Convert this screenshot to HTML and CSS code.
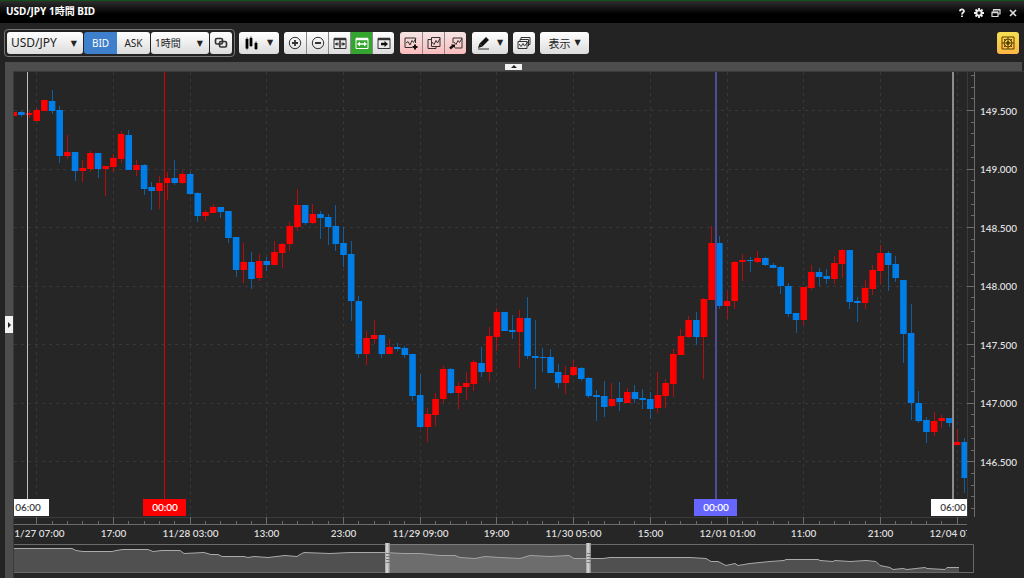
FILE: index.html
```html
<!DOCTYPE html>
<html lang="ja">
  <head>
    <meta charset="UTF-8" />
    <meta name="viewport" content="width=device-width, initial-scale=1.0" />
    <title>USD/JPY 1時間 BID</title>
    <link rel="stylesheet" href="styles.css">
  </head>
  <body>
    <header class="title-bar">
      <h1>USD/JPY 1時間 BID</h1>
      <div class="window-buttons">
        <button aria-label="Help">
          <svg width="10" height="10" viewBox="0 0 10 10"><path d="M3 3.2C3 .8 7 .8 7 3.2 7 4.6 5 4.6 5 6.4M5 7.6V9" stroke="#eee" stroke-width="1.8" fill="none" /></svg>
        </button>
        <button aria-label="Settings">
          <svg width="10" height="10" viewBox="0 0 10 10"><path d="M5 0V10M0 5H10M1.5 1.5L8.5 8.5M8.5 1.5L1.5 8.5" stroke="#eee" stroke-width="1.8" /><circle cx="5" cy="5" r="3.6" fill="#eee" /><circle cx="5" cy="5" r="1.7" fill="#111" /></svg>
        </button>
        <button aria-label="Restore">
          <svg width="10" height="10" viewBox="0 0 10 10"><path d="M2.5 3V1.5H9V6H7.5M1 4H7V8.5H1Z" stroke="#ddd" stroke-width="1.2" fill="none" stroke-linejoin="round" /><path d="M1 4.5H7M3 1.7H9" stroke="#ddd" stroke-width="1.6" /></svg>
        </button>
        <button aria-label="Close">
          <svg width="10" height="10" viewBox="0 0 10 10"><path d="M2 2L8 8M8 2L2 8" stroke="#ddd" stroke-width="1.7" /></svg>
        </button>
      </div>
    </header>

    <nav class="toolbar">
      <div class="pair-group">
        <label class="picker pair">
          <select aria-label="Currency pair"><option>USD/JPY</option><option>EUR/JPY</option></select>
        </label>
        <div class="group">
          <button class="text-button active-blue">BID</button>
          <button class="text-button">ASK</button>
        </div>
        <label class="picker period">
          <select aria-label="Period"><option>1時間</option><option>4時間</option></select>
        </label>
        <button class="tool" aria-label="Link charts">
          <svg width="14" height="12" viewBox="0 0 14 12"><rect x="1.5" y="1.5" width="7" height="5.5" rx="1.5" stroke-width="1.7" /><rect x="5.5" y="4.5" width="7" height="5.5" rx="1.5" stroke-width="1.7" /></svg>
        </button>
      </div>

      <button class="tool wide" aria-label="Chart type">
        <svg width="14" height="14" viewBox="0 0 14 14"><path d="M2 1.5V13.5M6 0.5V11M11 5.5V14" stroke="#222" /><path d="M2 3V12.5M6 2V10M11 7V13" stroke-width="2.8" stroke="#000" /></svg>
        <span class="arrow">▼</span>
      </button>

      <div class="group">
        <button class="tool" aria-label="Zoom in">
          <svg width="14" height="14" viewBox="0 0 14 14"><circle cx="7" cy="7" r="5.7" /><path d="M4 7H10M7 4V10" stroke-width="1.8" /></svg>
        </button>
        <button class="tool" aria-label="Zoom out">
          <svg width="14" height="14" viewBox="0 0 14 14"><circle cx="7" cy="7" r="5.7" /><path d="M4 7H10" stroke-width="1.8" /></svg>
        </button>
        <button class="tool" aria-label="Fit all">
          <svg width="14" height="14" viewBox="0 0 14 14"><path d="M1 2.5H13V12.5H1Z" /><path d="M1 3H13" stroke-width="2.4" /><path d="M2 8H12M7 4V12" /><path d="M2 8L4.5 6V10ZM12 8L9.5 6V10ZM7 4.5L5.5 6.5H8.5ZM7 11.5L5.5 9.5H8.5Z" fill="#333" stroke="none" /></svg>
        </button>
        <button class="tool active-green" aria-label="Fit width">
          <svg width="14" height="14" viewBox="0 0 14 14"><path d="M1 2.5H13V12.5H1Z" /><path d="M1 3H13" stroke-width="2.4" /><path d="M3 8H11" stroke-width="1.6" /><path d="M2 8L5 5.5V10.5ZM12 8L9 5.5V10.5Z" fill="#fff" stroke="none" /></svg>
        </button>
        <button class="tool" aria-label="Go to latest">
          <svg width="14" height="14" viewBox="0 0 14 14"><path d="M1 2.5H13V12.5H1Z" /><path d="M1 3H13" stroke-width="2.4" /><path d="M4 8H8" stroke-width="2.4" stroke="#111" /><path d="M7.5 5L11 8L7.5 11Z" fill="#111" stroke="none" /></svg>
        </button>
      </div>

      <div class="group pink">
        <button class="tool" aria-label="Add indicator">
          <svg width="14" height="14" viewBox="0 0 14 14"><path d="M11.5 7V2H1V11.5H8" /><path d="M2 7L4 5.5L6 9L8 4.5L9.5 6.5L12 2" /><path d="M8.5 11H13.5M11 8.5V13.5" stroke-width="2" stroke="#111" /></svg>
        </button>
        <button class="tool" aria-label="Copy indicator">
          <svg width="14" height="14" viewBox="0 0 14 14"><path d="M4 3.5H1V12.5H9V11" /><path d="M4.5 1.5H13V10.5H4.5Z" /><path d="M5 6L7 8.5L9 4.5L10.5 7L13 2.5" /></svg>
        </button>
        <button class="tool" aria-label="Move indicator">
          <svg width="14" height="14" viewBox="0 0 14 14"><path d="M4 7V2H13V12H6" /><path d="M5 6L7 8.5L9 4.5L10.5 6.5L13 2.5" /><path d="M1 12.5L4.5 9.5" stroke-width="2.4" stroke="#111" /><path d="M2 8.5H6V12Z" fill="#111" stroke="none" /></svg>
        </button>
      </div>

      <button class="tool pen" aria-label="Draw">
        <svg width="14" height="14" viewBox="0 0 14 14"><path d="M4 9L10.5 2.5" stroke-width="4" stroke="#111" /><path d="M1 12L2.5 7.5L5.5 10.5Z" fill="#111" stroke="none" /><path d="M1 13H12" /></svg>
        <span class="arrow">▼</span>
      </button>

      <button class="tool" aria-label="Chart windows">
        <svg width="14" height="14" viewBox="0 0 14 14"><path d="M4 4V1.5H13V8.5H11.5M3 6V3.5H11.5V10H10.5" /><path d="M1 5.5H10V12.5H1Z" /><path d="M2 8L4 10.5L6 7.5L7.5 10L12 4.5" /></svg>
      </button>

      <button class="tool display">表示 <span class="arrow">▼</span></button>

      <button class="tool yellow" aria-label="Crosshair">
        <svg width="14" height="14" viewBox="0 0 14 14"><path d="M1 1H13V13H1Z" /><circle cx="7" cy="7" r="4" /><path d="M7 1V13M1 7H13M3 3L5 5M11 3L9 5M3 11L5 9M11 11L9 9" /><circle cx="7" cy="7" r="1.5" fill="#5a4300" /></svg>
      </button>
    </nav>

    <div class="top-strip">
      <button aria-label="Collapse toolbar"><svg width="6" height="3" viewBox="0 0 6 3"><path d="M0 3L3 0L6 3Z" fill="#222" /></svg></button>
    </div>

    <main class="workspace">
      <aside class="side-strip">
        <button aria-label="Open side panel"><svg width="3" height="6" viewBox="0 0 3 6"><path d="M0 0L3 3L0 6Z" fill="#222" /></svg></button>
      </aside>
      <div class="chart-area">
        <div class="chart"><svg id="chart"></svg></div>
        <div class="navigator"><svg id="navigator"></svg></div>
      </div>
    </main>
    <script src="chart.js"></script>
  </body>
</html>
```
FILE: styles.css
```css
* {
  margin: 0;
  padding: 0;
  box-sizing: border-box;
}

body {
  font-family: "Noto Sans", "Noto Sans CJK JP", sans-serif;
  background-color: #232323;
  color: #eee;
  display: flex;
  flex-direction: column;
  height: 100vh;
  overflow: hidden;
}

button,
select {
  font-family: inherit;
  border: none;
  cursor: pointer;
}

/* Title bar */
.title-bar {
  display: flex;
  align-items: center;
  justify-content: space-between;
  height: 23px;
  padding: 0 6px 2px;
  border-top: 1px solid #12501a;
  background: linear-gradient(#2e2e2e, #000 60%);
}

.title-bar h1 {
  font-size: 10px;
  line-height: 20px;
  color: #fff;
}

.window-buttons {
  display: flex;
  gap: 7px;
  padding-top: 4px;
}

.window-buttons button {
  display: flex;
  background: none;
}

/* Toolbar */
.toolbar {
  display: flex;
  align-items: center;
  gap: 5px;
  height: 39px;
  padding: 0 5px 0 4px;
}

.pair-group {
  display: flex;
  gap: 1px;
  padding: 2px;
  margin-right: -1px;
  border: 1px solid #777;
  border-radius: 4px;
}

.group {
  display: flex;
  border-radius: 3px;
  overflow: hidden;
}

.toolbar > .group {
  margin-right: 1px;
}

.picker,
.tool,
.text-button {
  height: 22px;
  background: linear-gradient(#fff, #dcdcdc);
  color: #222;
}

.picker {
  position: relative;
  display: flex;
  border-radius: 3px;
}

.picker select {
  width: 100%;
  padding-left: 4px;
  appearance: none;
  background: none;
  font-size: 12px;
  color: #222;
}

.picker::after {
  content: "▼";
  position: absolute;
  right: 6px;
  top: 6px;
  font-family: "DejaVu Sans", sans-serif;
  font-size: 8px;
  line-height: 12px;
  pointer-events: none;
}

.pair {
  width: 76px;
}

.period {
  width: 58px;
}

.period select {
  font-size: 10px;
}

.text-button {
  width: 33px;
  font-size: 10px;
}

.tool {
  display: flex;
  align-items: center;
  justify-content: center;
  width: 22px;
  border-radius: 3px;
  font-size: 11px;
}

.group .tool {
  border-radius: 0;
}

.group .tool + .tool {
  border-left: 1px solid #888;
}

.tool svg {
  fill: none;
  stroke: #333;
}

.arrow {
  font-family: "DejaVu Sans", sans-serif;
  font-size: 8px;
}

.wide {
  width: 40px;
  gap: 8px;
}

.pen {
  width: 36px;
  gap: 6px;
}

.display {
  width: 49px;
  gap: 4px;
}

.active-blue {
  background: #3f80cc;
  color: #fff;
}

.active-green {
  background: #34a52f;
}

.active-green svg {
  stroke: #fff;
}

.pink .tool {
  background: linear-gradient(#f6e4e4, #fbbcbc);
}

.yellow {
  margin-left: auto;
  background: linear-gradient(#f5e055, #fdb545);
}

.yellow svg {
  stroke: #5a4300;
}

/* Collapsible strips */
.top-strip {
  display: flex;
  justify-content: center;
  align-items: center;
  height: 9px;
  margin: 0 2px 0 5px;
  background-color: #4d4d4d;
}

.top-strip button,
.side-strip button {
  display: flex;
  align-items: center;
  justify-content: center;
  background-color: #f2f2f2;
}

.top-strip button {
  width: 17px;
  height: 6px;
}

.workspace {
  flex: 1;
  display: flex;
  min-height: 0;
}

.side-strip {
  display: flex;
  align-items: center;
  width: 9px;
  margin-left: 5px;
  background-color: #4d4d4d;
  border-right: 1px solid #3a3a3a;
}

.side-strip button {
  width: 8px;
  height: 17px;
}

/* Chart */
.chart-area {
  flex: 1;
  display: flex;
  flex-direction: column;
  min-width: 0;
  background-color: #262626;
}

.chart {
  flex: 1;
  min-height: 0;
  border-top: 1px solid #3a3a3a;
}

.navigator {
  height: 35px;
}

.chart svg,
.navigator svg {
  display: block;
  width: 100%;
  height: 100%;
}

.label {
  font-family: Lato, sans-serif;
  font-size: 10px;
  font-weight: 600;
  fill: #ddd;
}

.time-label {
  text-anchor: middle;
}

.grid {
  stroke: #383838;
  stroke-dasharray: 3 4;
}

.frame {
  stroke: #3a3a3a;
}

.axis {
  stroke: #6c6c6c;
}

.up {
  fill: #f00;
  stroke: #f00;
}

.down {
  fill: #007ee8;
  stroke: #007ee8;
}

.wick {
  opacity: 0.65;
}

.body {
  stroke: none;
}

.nav-area {
  fill: #505050;
  stroke: none;
}

.nav-line {
  fill: none;
  stroke: #aaa;
}

.nav-border {
  fill: none;
  stroke: #6a6a6a;
}

.nav-window {
  fill: #999;
  fill-opacity: 0.4;
}
```
FILE: chart.js
```js
// One row per hour: direction, high, body top, body bottom, low
const candles = [
  ["r", 112, 112, 116, 116], ["b", 111, 112, 115, 117], ["r", 111, 113, 115, 118],
  ["r", 108, 110, 121, 121], ["r", 100, 100, 111, 111], ["b", 90, 101, 111, 114],
  ["b", 106, 110, 156, 163], ["r", 135, 152, 156, 159], ["b", 152, 152, 171, 181],
  ["r", 160, 168, 171, 182], ["r", 151, 153, 169, 172], ["b", 153, 153, 169, 178],
  ["r", 166, 166, 169, 196], ["r", 154, 158, 167, 172], ["r", 131, 134, 159, 163],
  ["b", 130, 135, 170, 170], ["r", 160, 165, 170, 176], ["b", 164, 165, 189, 195],
  ["b", 182, 187, 191, 210], ["r", 176, 183, 191, 209], ["r", 172, 178, 183, 200],
  ["b", 160, 178, 183, 185], ["r", 171, 174, 183, 184], ["b", 172, 174, 194, 195],
  ["b", 192, 193, 216, 222], ["r", 210, 212, 216, 221], ["r", 204, 207, 213, 213],
  ["b", 207, 207, 212, 218], ["b", 211, 211, 238, 243], ["b", 237, 237, 270, 277],
  ["r", 243, 262, 270, 283], ["b", 252, 262, 279, 289], ["r", 254, 261, 278, 281],
  ["b", 257, 261, 265, 271], ["r", 241, 252, 265, 265], ["r", 243, 244, 253, 268],
  ["r", 222, 226, 244, 251], ["r", 189, 205, 227, 231], ["b", 205, 205, 223, 225],
  ["r", 204, 214, 223, 224], ["b", 211, 214, 218, 239], ["b", 214, 217, 227, 245],
  ["b", 205, 226, 244, 251], ["b", 227, 243, 255, 267], ["b", 241, 254, 301, 321],
  ["b", 296, 301, 354, 358], ["r", 331, 338, 354, 365], ["r", 320, 335, 339, 344],
  ["b", 335, 335, 354, 358], ["r", 339, 347, 354, 354], ["b", 343, 347, 349, 351],
  ["b", 346, 348, 355, 358], ["b", 354, 354, 396, 401], ["b", 374, 395, 427, 428],
  ["r", 408, 414, 427, 442], ["r", 393, 399, 415, 426], ["r", 366, 369, 399, 403],
  ["b", 368, 369, 393, 394], ["r", 382, 386, 393, 409], ["r", 372, 383, 387, 400],
  ["r", 360, 362, 384, 391], ["b", 347, 363, 372, 377], ["r", 327, 336, 372, 382],
  ["r", 308, 312, 337, 351], ["b", 312, 312, 331, 331], ["b", 315, 330, 332, 339],
  ["r", 310, 318, 332, 368], ["b", 297, 318, 356, 359], ["b", 320, 356, 358, 389],
  ["b", 348, 357, 358, 372], ["b", 349, 357, 373, 373], ["b", 364, 372, 383, 388],
  ["r", 366, 375, 383, 394], ["r", 360, 367, 375, 376], ["b", 367, 368, 379, 381],
  ["b", 377, 378, 396, 398], ["b", 390, 395, 397, 421], ["b", 381, 396, 407, 417],
  ["r", 383, 399, 406, 407], ["b", 382, 398, 402, 411], ["r", 388, 392, 403, 403],
  ["b", 385, 392, 399, 403], ["b", 389, 398, 400, 409], ["b", 392, 399, 409, 419],
  ["r", 372, 395, 408, 413], ["r", 379, 383, 396, 408], ["r", 349, 354, 384, 397],
  ["r", 329, 336, 355, 355], ["r", 316, 320, 337, 338], ["b", 312, 320, 337, 345],
  ["r", 298, 299, 337, 379], ["r", 226, 243, 300, 300], ["b", 236, 243, 306, 309],
  ["r", 291, 301, 306, 319], ["r", 261, 262, 301, 309], ["r", 254, 260, 262, 281],
  ["b", 257, 260, 261, 272], ["r", 251, 258, 262, 263], ["b", 257, 258, 265, 266],
  ["b", 263, 265, 268, 268], ["b", 266, 267, 286, 294], ["b", 283, 286, 314, 317],
  ["b", 313, 313, 320, 333], ["r", 287, 287, 320, 325], ["r", 265, 272, 288, 290],
  ["b", 268, 272, 277, 286], ["b", 269, 276, 279, 284], ["r", 256, 263, 279, 284],
  ["r", 249, 250, 264, 278], ["b", 250, 250, 302, 309], ["b", 297, 301, 303, 322],
  ["r", 280, 288, 303, 309], ["r", 265, 270, 289, 295], ["r", 245, 253, 271, 284],
  ["b", 251, 253, 265, 291], ["b", 256, 264, 278, 282], ["b", 280, 280, 334, 363],
  ["b", 304, 333, 403, 420], ["b", 391, 403, 421, 423], ["b", 417, 420, 432, 443],
  ["r", 412, 421, 432, 436], ["r", 415, 418, 421, 428], ["b", 418, 418, 423, 427],
  ["r", 429, 442, 445, 445], ["b", 438, 442, 478, 493],
];

const times = [
  "11/27 07:00", "17:00", "11/28 03:00", "13:00", "23:00", "11/29 09:00", "19:00",
  "11/30 05:00", "15:00", "12/01 01:00", "11:00", "21:00", "12/04 07:00",
];

// Session lines: position, line width, line, box and text colours, text
const sessions = [
  [13, 1, "#c0c0c0", "#fff", "#444", "06:00"],
  [150, 1, "#d80000", "#f00", "#fff", "00:00"],
  [701, 2, "#4c4c98", "#6666ff", "#fff", "00:00"],
  [938, 2, "#8c8c8c", "#fff", "#444", "06:00"],
];

const history = [
  [0, 4], [16, 4], [36, 4], [58, 4], [62, 6], [69, 7], [98, 7], [102, 6], [109, 5],
  [134, 5], [139, 7], [148, 6], [166, 6], [170, 9], [190, 8], [197, 10], [204, 10],
  [208, 12], [230, 12], [234, 13], [240, 12], [254, 13], [271, 11], [283, 12],
  [286, 10], [290, 8], [316, 9], [336, 8], [371, 8], [389, 9], [406, 9], [426, 11],
  [441, 11], [446, 13], [461, 14], [471, 12], [486, 13], [506, 14], [516, 11],
  [536, 12], [555, 11], [560, 14], [573, 14], [589, 14], [596, 13], [631, 13],
  [676, 13], [692, 14], [697, 17], [704, 17], [712, 21], [721, 19], [724, 21],
  [736, 19], [756, 17], [770, 16], [772, 15], [786, 15], [804, 15], [806, 16],
  [819, 17], [821, 16], [836, 17], [852, 16], [862, 17], [866, 21], [876, 23],
  [879, 25], [889, 24], [893, 25], [911, 23], [913, 24], [931, 25], [933, 23],
  [945, 23],
];

const line = (x1, y1, x2, y2, cls) =>
  `<line x1="${x1}" y1="${y1}" x2="${x2}" y2="${y2}" class="${cls}" />`;

function drawChart() {
  const svg = document.getElementById("chart");
  const w = svg.clientWidth;
  const h = svg.clientHeight;
  const plotW = w - 57;
  const plotH = h - 26;
  const kx = plotW / 953;
  const ky = plotH / 445;
  const step = 7.67 * kx;
  const first = 22.7 * kx;
  const barW = step * 0.86;
  const sharp = (v) => Math.round(v - 0.5) + 0.5;
  const sy = (v) => Math.round((v - 72) * ky);
  let grid = "";
  let axes = "";
  let labels = "";
  let bars = "";
  let marks = "";

  axes += line(0, plotH + 0.5, plotW, plotH + 0.5, "frame");
  axes += line(0, plotH + 7.5, plotW, plotH + 7.5, "axis");
  axes += line(plotW + 0.5, 0, plotW + 0.5, plotH, "frame");
  axes += line(plotW + 7.5, 0, plotW + 7.5, plotH, "axis");

  for (let i = 0; i <= 60; i++) {
    const x = sharp(first + i * 2 * step);
    const major = i % 5 === 0;
    axes += line(x, plotH + (major ? 0 : 4), x, plotH + 7, "axis");
    if (major) {
      grid += line(x, 0, x, plotH, "grid");
      labels += `<text class="label time-label" x="${x}" y="${plotH + 20}">${times[i / 5]}</text>`;
    }
  }

  // Price scale, half a yen per grid line
  for (let i = -3; i < 35; i++) {
    const y = sharp((38.5 + i * 11.71) * ky);
    if (y > plotH) break;
    const major = i % 5 === 0;
    axes += line(plotW + (major ? 0 : 4), y, plotW + 7, y, "axis");
    if (major) grid += line(0, y, plotW, y, "grid");
  }
  for (let i = 0; i < 8; i++) {
    const y = Math.round((38.5 + i * 58.55) * ky);
    axes += `<text class="label" x="${plotW + 13}" y="${y + 4}" clip-path="url(#priceClip)">${(149.5 - i / 2).toFixed(3)}</text>`;
  }

  candles.forEach(([dir, high, top, bottom, low], i) => {
    const x = first + (i - 3) * step;
    const cls = dir === "r" ? "up" : "down";
    const barH = Math.max(1, sy(bottom) - sy(top));
    bars += line(sharp(x), sy(high), sharp(x), sy(low), `${cls} wick`);
    bars += `<rect class="${cls} body" x="${x - barW / 2}" y="${sy(top)}" width="${barW}" height="${barH}" />`;
  });

  sessions.forEach(([pos, width, stroke, fill, color, text]) => {
    const x = Math.round(pos * kx);
    marks += `<rect x="${x}" y="0" width="${width}" height="${plotH - 18}" fill="${stroke}" />`;
    marks += `<rect x="${x - 21}" y="${plotH - 18}" width="43" height="17" fill="${fill}" />`;
    marks += `<text class="label time-label" x="${x + 1}" y="${plotH - 6}" style="fill: ${color}">${text}</text>`;
  });

  svg.innerHTML = `
    <clipPath id="plotClip"><rect width="${plotW}" height="${h}" /></clipPath>
    <clipPath id="priceClip"><rect x="${plotW}" width="57" height="${plotH}" /></clipPath>
    ${grid}
    <g clip-path="url(#plotClip)">${bars}${marks}${labels}</g>
    ${axes}`;
}

function drawNavigator() {
  const svg = document.getElementById("navigator");
  const w = svg.clientWidth - 50;
  const kx = w / 960;
  const points = history.map(([x, y]) => `${Math.round(x * kx)},${y + 1.5}`).join(" ");
  const left = Math.round(372 * kx);
  const right = Math.round(573 * kx);
  const handle = (x) => `
    <rect x="${x}" y="0" width="5" height="30" fill="url(#handle)" />
    <path d="M${x + 1} 10.5H${x + 5}M${x + 1} 13.5H${x + 5}M${x + 1} 16.5H${x + 5}M${x + 1} 19.5H${x + 5}" stroke="#777" />`;

  svg.innerHTML = `
    <linearGradient id="handle"><stop offset="0" stop-color="#999" /><stop offset="0.4" stop-color="#ddd" /><stop offset="1" stop-color="#888" /></linearGradient>
    <polygon class="nav-area" points="0,29 ${points} ${Math.round(945 * kx)},29" />
    <polyline class="nav-line" points="${points}" />
    <path class="nav-border" d="M0 1.5H${w - 0.5}V29.5H0" />
    <rect class="nav-window" x="${left}" y="1" width="${right - left}" height="28" />
    ${handle(left - 1)}${handle(right - 1)}`;
}

function draw() {
  drawChart();
  drawNavigator();
}

window.addEventListener("resize", draw);
draw();
```
